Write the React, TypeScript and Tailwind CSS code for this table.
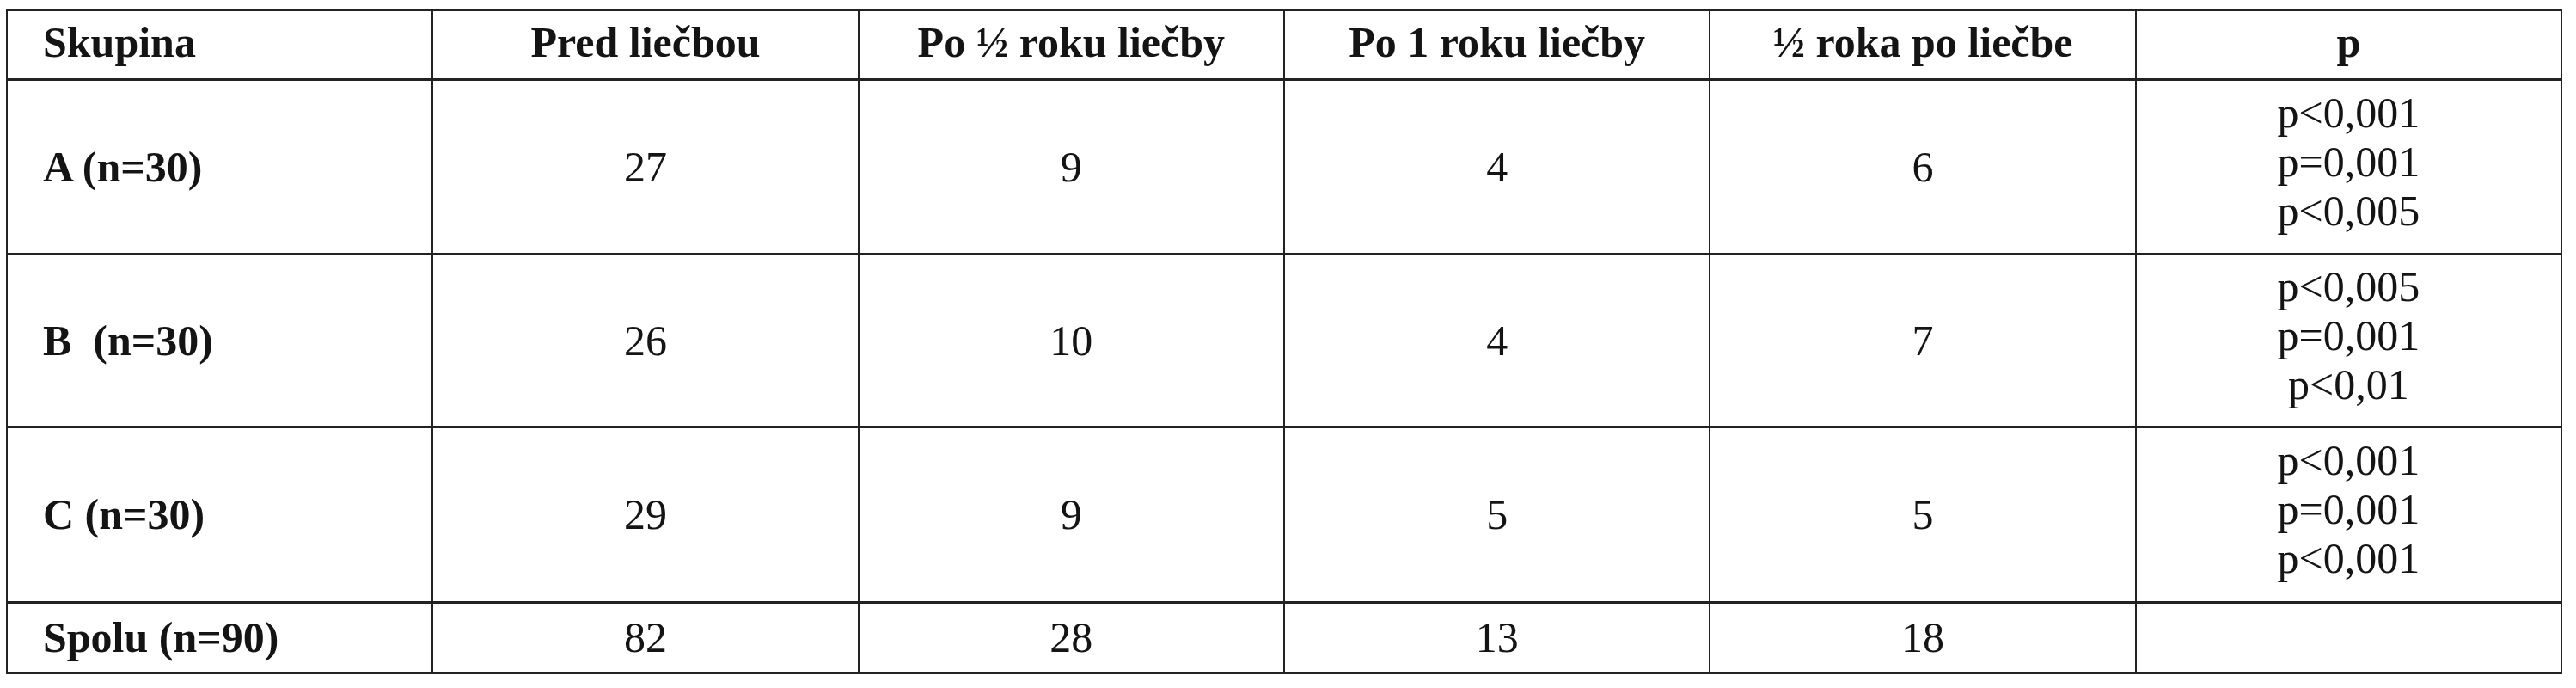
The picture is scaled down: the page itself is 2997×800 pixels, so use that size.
type Row = {
  group: string;
  values: string[];
  p: string[];
  tall: boolean;
};

const headers = ['Pred liečbou', 'Po ½ roku liečby', 'Po 1 roku liečby', '½ roka po liečbe', 'p'];

const rows: Row[] = [
  { group: 'A (n=30)', values: ['27', '9', '4', '6'], p: ['p<0,001', 'p=0,001', 'p<0,005'], tall: true },
  { group: 'B\u00a0\u00a0(n=30)', values: ['26', '10', '4', '7'], p: ['p<0,005', 'p=0,001', 'p<0,01'], tall: true },
  { group: 'C (n=30)', values: ['29', '9', '5', '5'], p: ['p<0,001', 'p=0,001', 'p<0,001'], tall: true },
  { group: 'Spolu (n=90)', values: ['82', '28', '13', '18'], p: [], tall: false },
];

const rowHeights = ['h-[203px]', 'h-[201px]', 'h-[204px]', 'h-[82px]'];

const cell = 'border-x-2 border-y-[3px] border-[#222] align-middle';

export default function App() {
  return (
    <div className="min-h-[800px] w-[2997px] bg-white pl-[7px] pt-[10px] font-['Liberation_Serif','Times_New_Roman',serif] text-[50px] leading-[57px] text-[#141414]">
      <table className="w-[2974px] table-fixed border-collapse">
        <thead>
          <tr className="h-[81px]">
            <th className={`${cell} pb-[6px] pl-[41px] text-left font-bold`}>Skupina</th>
            {headers.map((h) => (
              <th key={h} className={`${cell} pb-[6px] text-center font-bold`}>
                {h}
              </th>
            ))}
          </tr>
        </thead>
        <tbody>
          {rows.map((r, i) => (
            <tr key={r.group} className={rowHeights[i]}>
              <td className={`${cell} pl-[41px] text-left font-bold whitespace-pre`}>{r.group}</td>
              {r.values.map((v, j) => (
                <td key={j} className={`${cell} text-center`}>
                  {v}
                </td>
              ))}
              <td className={`${cell} pb-[12px] text-center`}>
                {r.p.map((line) => (
                  <div key={line + i}>{line}</div>
                ))}
              </td>
            </tr>
          ))}
        </tbody>
      </table>
    </div>
  );
}
